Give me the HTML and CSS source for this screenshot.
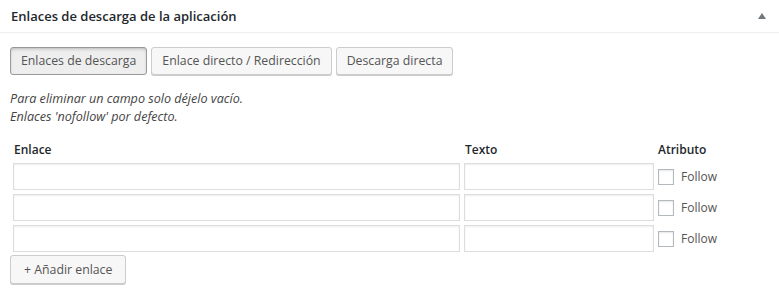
FILE: index.html
```html
<!DOCTYPE html>
<html lang="es">
<head>
  <meta charset="UTF-8"/>
  <title>Enlaces de descarga</title>
  <link rel="stylesheet" href="styles.css">
</head>
<body>
  <div class="postbox">
    <header class="postbox-header">
      <h2>Enlaces de descarga de la aplicación</h2>
      <span class="toggle-arrow"></span>
    </header>

    <div class="inside">
      <div class="tabs">
        <button class="button active">Enlaces de descarga</button>
        <button class="button">Enlace directo / Redirección</button>
        <button class="button">Descarga directa</button>
      </div>

      <p class="notes">
        Para eliminar un campo solo déjelo vacío.<br>
        Enlaces 'nofollow' por defecto.
      </p>

      <div class="links-table">
        <div class="th">Enlace</div>
        <div class="th">Texto</div>
        <div class="th">Atributo</div>

        <input type="text" class="field">
        <input type="text" class="field">
        <label class="follow"><input type="checkbox"><span>Follow</span></label>

        <input type="text" class="field">
        <input type="text" class="field">
        <label class="follow"><input type="checkbox"><span>Follow</span></label>

        <input type="text" class="field">
        <input type="text" class="field">
        <label class="follow"><input type="checkbox"><span>Follow</span></label>
      </div>

      <button class="button add-btn">+ Añadir enlace</button>
    </div>
  </div>
</body>
</html>
```

FILE: styles.css
```css
/* RESET */
* { box-sizing:border-box; margin:0; padding:0 }
html, body {
  background:#fff;
  font-family:'Open Sans','Noto Sans',sans-serif;
  font-size:12px;
  color:#444;
}

/* BOX */
.postbox { width:779px; height:291px; background:#fff; }
.postbox-header {
  height:33px;
  display:flex;
  align-items:center;
  justify-content:space-between;
  padding:0 11px 1px 11px;
  border-bottom:1px solid #eee;
}
.postbox-header h2 {
  font-size:13px;
  font-weight:600;
  color:#23282d;
}
.toggle-arrow {
  width:0; height:0;
  margin-right:2px;
  border-left:4px solid transparent;
  border-right:4px solid transparent;
  border-bottom:6px solid #72777c;
}

.inside { padding:14px 10px 0 10px; }

/* BUTTONS */
.tabs { display:flex; gap:4px; }
.button {
  height:28px;
  padding:0 10px 1px;
  font-family:inherit;
  font-size:12.3px;
  color:#555;
  background:#f7f7f7;
  border:1px solid #ccc;
  border-radius:3px;
  box-shadow:0 1px 0 #ccc;
  cursor:pointer;
}
.button.active {
  background:#eee;
  border-color:#999;
  box-shadow:inset 0 2px 5px -3px rgba(0,0,0,.5);
}

.notes {
  margin-top:15px;
  font-style:italic;
  font-size:12.6px;
  line-height:18px;
  color:#444;
}

/* TABLE */
.links-table {
  display:grid;
  grid-template-columns:447px 190px auto;
  column-gap:4px;
  row-gap:4px;
  margin:15px 0 3px 3px;
}
.th {
  font-weight:600;
  color:#23282d;
  line-height:18px;
  padding-left:1px;
}
.links-table .th:nth-child(3) { padding-left:0 }
.field {
  height:27px;
  border:1px solid #ddd;
  box-shadow:inset 0 1px 2px rgba(0,0,0,.07);
  background:#fff;
}
.follow {
  display:flex;
  align-items:center;
  gap:7px;
  color:#555;
}
.follow input {
  appearance:none;
  width:16px; height:16px;
  border:1px solid #b4b9be;
  box-shadow:inset 0 1px 2px rgba(0,0,0,.1);
  background:#fff;
}

.add-btn { height:29px; padding:0 13px 1px; }
```
